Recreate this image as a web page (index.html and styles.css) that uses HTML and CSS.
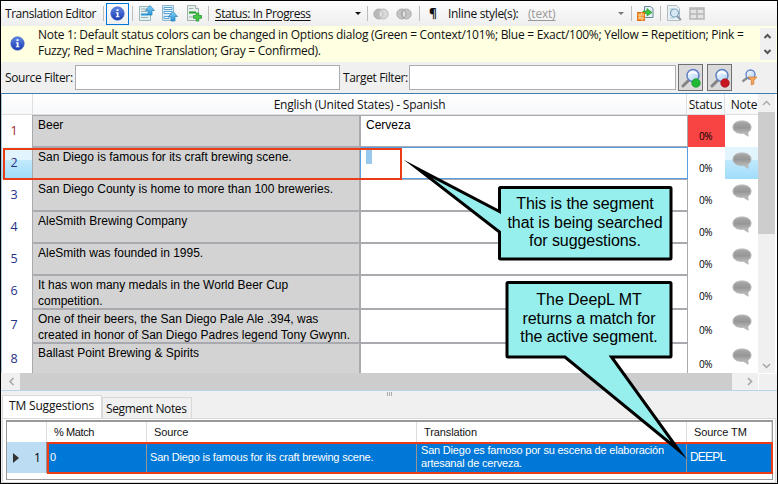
FILE: index.html
```html
<!DOCTYPE html>
<html lang="en">
<head>
<meta charset="utf-8">
<title>Translation Editor</title>
<link rel="stylesheet" href="styles.css">
</head>
<body>
<svg class="defs" width="0" height="0">
  <defs>
    <linearGradient id="bub" x2="0" y2="1"><stop offset="0" stop-color="#b5b5b5"/><stop offset=".45" stop-color="#999"/><stop offset="1" stop-color="#c6c6c6"/></linearGradient>
    <linearGradient id="inf" x2="0" y2="1"><stop offset="0" stop-color="#5f87e6"/><stop offset="1" stop-color="#1738ae"/></linearGradient>
    <linearGradient id="arr" x2="0" y2="1"><stop offset="0" stop-color="#82d2f8"/><stop offset="1" stop-color="#2d93d3"/></linearGradient>
    <linearGradient id="lens" x2="1" y2="1"><stop offset="0" stop-color="#fff"/><stop offset="1" stop-color="#a9cdf5"/></linearGradient>
  </defs>
  <symbol id="bubble" viewBox="0 0 20 18"><path d="M10 1C15 1 19 3.200 19 7.200c0 2.300-1.200 4-3.200 5l.3 4-4.400-2.900C5.500 13.800 1 11.500 1 7.200 1 3.200 5 1 10 1Z" fill="url(#bub)" stroke="#b4b4b4"/><path d="M2 7.500q8 2 16 0Q18 2 10 2T2 7.500" fill="#8f8f8f" opacity=".3"/></symbol>
  <symbol id="info" viewBox="0 0 15 15"><circle cx="7.500" cy="7.500" r="6.700" fill="url(#inf)" stroke="#4264c9" stroke-width=".7"/><path d="M6 6.200h2.500v4h1v1H5.800v-1h1v-3H6zM6.500 3.200h2v1.900h-2z" fill="#fff"/></symbol>
  <symbol id="lensIcon" viewBox="0 0 20 20"><path d="m2 18 6-6" stroke="#858585" stroke-width="3" stroke-linecap="round"/><circle cx="12" cy="7.500" r="6" fill="url(#lens)" stroke="#6080c4" stroke-width="1.500"/><path d="M8 6q3-4 8 0" stroke="#fff" stroke-width="2" fill="none"/></symbol>
</svg>
<main class="window">
  <header class="toolbar">
    <span class="title">Translation Editor</span>
    <i class="sep"></i>
    <span class="info-button"><svg width="15" height="15"><use href="#info"/></svg></span>
    <i class="sep sep-b"></i>
    <svg class="t-up" width="16" height="17" viewBox="0 0 16 17"><path d="M.5 1.500h11v14H.5z" fill="#e4eff0" stroke="#9ab7b9"/><path d="M2 4h6M2 6.500h6M2 12.500h7" stroke="#9aafb0"/><path d="M2 9.500h7" stroke="#2697df" stroke-width="2"/><path d="m11 .5 4.500 5H13V10H9V5.500H6.500z" fill="url(#arr)" stroke="#2584bd" stroke-width=".7"/></svg>
    <svg class="t-up2" width="16" height="17" viewBox="0 0 16 17"><path d="M.5.500h11v15H.5z" fill="#d9edf8" stroke="#94b9cf"/><path d="M2 2.500h8v2H2zM2 6.500h8v2H2zM2 11.500h5v2H2z" fill="#fff" stroke="#58a3d4"/><path d="m11 6.500 4.500 5H13V16H9v-4.500H6.500z" fill="url(#arr)" stroke="#2584bd" stroke-width=".7"/></svg>
    <svg class="t-add" width="16" height="17" viewBox="0 0 16 17"><path d="M1.500.500h8l3 3v12h-11z" fill="#e8f0ed" stroke="#9fb1aa"/><path d="M9.500.500v3h3" fill="#fff" stroke="#9fb1aa"/><path d="M3 3.500h4M3 12h4" stroke="#9aafa7"/><path d="M3 7.500h7" stroke="#229b29" stroke-width="2"/><path d="M7.500 10.500h2.700V8h2.600v2.500h2.700v2.800h-2.700v2.700h-2.600v-2.700H7.500z" fill="#46cc44" stroke="#188c23" stroke-width=".7"/></svg>
    <i class="sep sep-c"></i>
    <span class="status-link">Status: In Progress</span>
    <i class="caret"></i>
    <i class="sep sep-d"></i>
    <svg class="rings" width="16" height="12" viewBox="0 0 16 12"><circle cx="5.800" cy="6" r="5" fill="#b8b8b8" stroke="#b0b0b0"/><circle cx="10.200" cy="6" r="5" fill="#d9d9d9" stroke="#bbb"/><path d="M8 2q4 4 0 8-4-4 0-8" fill="#dedede" stroke="#aaa" stroke-width=".6"/></svg>
    <svg class="rings rings-b" width="16" height="12" viewBox="0 0 16 12"><circle cx="5.800" cy="6" r="5" fill="#c4c4c4" stroke="#adadad"/><circle cx="10.200" cy="6" r="5" fill="#c4c4c4" stroke="#adadad"/><path d="M8 2q4 4 0 8-4-4 0-8" fill="#e0e0e0" stroke="#999" stroke-width=".8"/></svg>
    <i class="sep sep-e"></i>
    <span class="pilcrow">¶</span>
    <span class="inline-label">Inline style(s):</span>
    <span class="inline-value">(text)</span>
    <i class="caret caret-gray"></i>
    <i class="sep sep-f"></i>
    <svg class="t-exp" width="17" height="17" viewBox="0 0 17 17"><path d="M7.500 1.500h6l2.500 2v9H7.500z" fill="#e7f1f4" stroke="#618a9a"/><path d="M6 6h4V3.500L15 7.500 10 11V8.500H6z" fill="#3ac43d" stroke="#248927" stroke-width=".6"/><path d="M.5 7.500h7v8h-7z" fill="#f39a36" stroke="#d96a12"/><path d="M.5 10h7m-7 3h7M4.500 7.500V10M3 10v3m2 0v3" stroke="#ffdfae" stroke-width=".8"/></svg>
    <i class="sep sep-g"></i>
    <svg class="t-prev" width="15" height="17" viewBox="0 0 15 17"><path d="M.5.500h9l3 3v12H.5z" fill="#eef3f5" stroke="#aabac0"/><path d="M2.500 4h4m-4 3h2m-2 3h2m-2 3h5" stroke="#a8c7d1"/><path d="m10 11 4 4" stroke="#8b9ba7" stroke-width="2"/><circle cx="7.500" cy="8" r="4" fill="#d5e8f4" stroke="#7ea3bd" stroke-width="1.200"/></svg>
    <svg class="t-grid" width="16" height="14" viewBox="0 0 16 14"><path d="M1 1h14v11H1z" fill="#e4e4e4" stroke="#b7b7b7" stroke-width="1.500"/><path d="M1 2h14M1 7h14M8 1v11" stroke="#b7b7b7" stroke-width="1.600"/></svg>
  </header>

  <section class="note">
    <svg class="note-icon" width="15" height="15"><use href="#info"/></svg>
    <p class="note-text">Note 1: Default status colors can be changed in Options dialog (Green = Context/101%; Blue = Exact/100%; Yellow = Repetition; Pink =<br>Fuzzy; Red = Machine Translation; Gray = Confirmed).</p>
    <svg class="note-spin" width="16" height="32" viewBox="0 0 16 32"><path d="m4.500 10 3-3 3 3m-6 12 3 3 3-3" fill="none" stroke="#555" stroke-width="2"/></svg>
  </section>

  <section class="filters">
    <span class="source-label">Source Filter:</span><span class="field source-field"></span>
    <span class="target-label">Target Filter:</span><span class="field target-field"></span>
    <span class="filter-button"><svg width="20" height="20"><use href="#lensIcon"/><circle cx="15" cy="15" r="4.300" fill="#20b735" stroke="#129428" stroke-width=".6"/></svg></span>
    <span class="filter-button"><svg width="20" height="20"><use href="#lensIcon"/><circle cx="15" cy="15" r="4.300" fill="#c81721" stroke="#97131a" stroke-width=".6"/></svg></span>
    <svg class="funnel" width="17" height="17" viewBox="0 0 17 17"><path d="m1.500 12.500 5-4" stroke="#8c8c8c" stroke-width="2.500"/><circle cx="9.500" cy="5.500" r="4.500" fill="url(#lens)" stroke="#6080c4" stroke-width="1.300"/><path d="M7 8h9l-3.200 3.500V15l-2.500 1v-4.500z" fill="#f8a65c" stroke="#cc7330" stroke-width=".7"/></svg>
  </section>

  <section class="grid">
    <div class="grid-main">
      <div class="grid-head"><span class="h-corner"></span><span class="h-lang"><b>English (United States) - Spanish</b></span><span class="h-status">Status</span><span class="h-note">Note</span></div>
      <div class="rows">
        <div class="row"><span class="num first">1</span><span class="src"><b>Beer</b></span><span class="tgt">Cerveza</span><span class="pct red">0%</span><span class="cmt"><svg><use href="#bubble"/></svg></span></div>
        <div class="row active"><span class="num">2</span><span class="src"><b>San Diego is famous for its craft brewing scene.</b></span><span class="tgt"><i class="cursor"></i></span><span class="pct">0%</span><span class="cmt"><svg><use href="#bubble"/></svg></span></div>
        <div class="row"><span class="num">3</span><span class="src"><b>San Diego County is home to more than 100 breweries.</b></span><span class="tgt"></span><span class="pct">0%</span><span class="cmt"><svg><use href="#bubble"/></svg></span></div>
        <div class="row"><span class="num">4</span><span class="src"><b>AleSmith Brewing Company</b></span><span class="tgt"></span><span class="pct">0%</span><span class="cmt"><svg><use href="#bubble"/></svg></span></div>
        <div class="row"><span class="num">5</span><span class="src"><b>AleSmith was founded in 1995.</b></span><span class="tgt"></span><span class="pct">0%</span><span class="cmt"><svg><use href="#bubble"/></svg></span></div>
        <div class="row tall"><span class="num">6</span><span class="src"><b>It has won many medals in the World Beer Cup<br>competition.</b></span><span class="tgt"></span><span class="pct">0%</span><span class="cmt"><svg><use href="#bubble"/></svg></span></div>
        <div class="row tall"><span class="num">7</span><span class="src"><b>One of their beers, the San Diego Pale Ale .394, was<br>created in honor of San Diego Padres legend Tony Gwynn.</b></span><span class="tgt"></span><span class="pct">0%</span><span class="cmt"><svg><use href="#bubble"/></svg></span></div>
        <div class="row"><span class="num">8</span><span class="src"><b>Ballast Point Brewing &amp; Spirits</b></span><span class="tgt"></span><span class="pct">0%</span><span class="cmt"><svg><use href="#bubble"/></svg></span></div>
      </div>
    </div>
    <div class="vscroll"><svg width="17" height="18" viewBox="0 0 17 18"><path d="m5 11 3.500-3.500L12 11" fill="none" stroke="#a6a6a6" stroke-width="1.300"/></svg><i class="vthumb"></i><svg width="17" height="16" viewBox="0 0 17 16"><path d="m5 6 3.500 3.500L12 6" fill="none" stroke="#a6a6a6" stroke-width="1.500"/></svg></div>
  </section>
  <div class="hscroll"><svg width="17" height="17" viewBox="0 0 17 17"><path d="M10.500 5 7 8.500l3.500 3.500" fill="none" stroke="#a6a6a6" stroke-width="1.600"/></svg><i class="hthumb"></i><svg width="26" height="17" viewBox="0 0 26 17"><path d="m16 5 3.500 3.500L16 12" fill="none" stroke="#a6a6a6" stroke-width="1.600"/></svg><i class="corner"></i></div>

  <nav class="tabs"><span class="tab current">TM Suggestions</span><span class="tab other">Segment Notes</span><svg class="grip" width="6" height="4"><path d="M.5 0v4m2-4v4m2-4v4" stroke="#aaa"/></svg></nav>
  <section class="panel">
    <div class="tm">
      <div class="tm-head"><span></span><span class="c-match">% Match</span><span class="c-source">Source</span><span class="c-trans">Translation</span><span class="c-tm">Source TM</span></div>
      <div class="tm-row"><span class="tm-num"><i class="play"></i>1</span><span class="v-match">0</span><span class="v-source">San Diego is famous for its craft brewing scene.</span><span class="v-trans"><b>San Diego es famoso por su escena de elaboración<br>artesanal de cerveza.</b></span><span class="v-tm">DEEPL</span></div>
    </div>
  </section>

  <div class="mark mark-segment"></div>
  <div class="mark mark-match"></div>
  <svg class="callout-shapes" width="778" height="484" viewBox="0 0 778 484">
    <g fill="#97efed" stroke="#000" stroke-width="3" stroke-linejoin="miter" stroke-miterlimit="20">
      <path d="M500.500 187.500h169.500q1 0 1 1V258q0 1-1 1H500.500q-1 0-1-1v-26L418 169l81.500 42.500v-23q0-1 1-1Z"/>
      <path d="M508 282.500h162q1 0 1 1V356q0 1-1 1h-58.500l67.500 93.500L565 357h-57q-1 0-1-1v-72.500q0-1 1-1Z"/>
    </g>
  </svg>
  <p class="callout callout-segment">This is the segment<br>that is being searched<br>for suggestions.</p>
  <p class="callout callout-match">The DeepL MT<br>returns a match for<br>the active segment.</p>
</main>
</body>
</html>
```

FILE: styles.css
```css
* { box-sizing: border-box; }
body { margin: 0; font: 12px/16px "Open Sans", "Noto Sans", sans-serif; color: #111; }
i, b { font-style: normal; font-weight: normal; }
svg { display: block; flex: none; }
span, p { white-space: nowrap; }
.defs { position: absolute; }
.window { position: relative; width: 778px; height: 484px; border: 1px solid #000; background: #f0f0f0; overflow: hidden; display: flex; flex-direction: column; }
.window > * { flex: none; }

.toolbar { height: 25px; display: flex; align-items: center; background: linear-gradient(#fdfdfd, #eee); padding-left: 4px; }
.title { width: 98px; letter-spacing: -.47px; }
.sep { width: 1px; height: 15px; background: #bdbdbd; flex: none; }
.info-button { width: 23px; height: 22px; border: 1px solid #0078d7; display: flex; align-items: center; justify-content: center; margin-left: 2px; }
.sep-b { margin-left: 3px; }
.t-up { margin-left: 6px; }
.t-up2 { margin-left: 7px; }
.t-add { margin-left: 8px; }
.sep-c { margin-left: 6px; }
.status-link { width: 137px; margin-left: 6px; letter-spacing: -.44px; text-decoration: underline; text-underline-offset: 2px; }
.caret { margin-left: 3px; width: 0; height: 0; border: 3px solid transparent; border-top-color: #111; border-bottom: 0; }
.sep-d { margin-left: 6px; }
.rings { margin-left: 5px; }
.rings-b { margin-left: 7px; }
.sep-e { margin-left: 7px; }
.pilcrow { width: 19px; margin-left: 9px; font-weight: bold; }
.inline-label { width: 80px; letter-spacing: -.33px; }
.inline-value { width: 90px; color: #999; text-decoration: underline; text-underline-offset: 2px; letter-spacing: -.2px; }
.caret-gray { border-top-color: #777; margin-left: 0; }
.sep-f { margin-left: 7px; }
.t-exp { margin-left: 5px; }
.sep-g { margin-left: 6px; }
.t-prev { margin-left: 6px; }
.t-grid { margin-left: 7px; }

.note { height: 36px; background: #ffffe1; display: flex; }
.note-icon { margin: 10px 0 0 9px; }
.note-text { margin: 1px 0 0 13px; width: 721px; line-height: 16px; letter-spacing: -.275px; }
.note-spin { background: #f0f0f0; margin: 2px 0 0 1px; }

.filters { height: 31px; display: flex; align-items: center; padding-left: 4px; }
.source-label { width: 70px; letter-spacing: -.38px; }
.field { height: 25px; border: 1px solid #abadb3; background: #fff; }
.source-field { width: 265px; }
.target-label { width: 66px; margin-left: 3px; letter-spacing: -.38px; }
.target-field { width: 267px; }
.filter-button { width: 25px; height: 27px; margin-left: 2px; background: #dadada; border: 1px solid #707070; display: flex; align-items: center; justify-content: center; }
.filter-button + .filter-button { margin-left: 4px; }
.funnel { margin-left: 9px; }

.grid { height: 280px; border-top: 1px solid #3c7fb1; border-left: 1px solid #a5c7de; display: flex; background: #fff; overflow: hidden; }
.grid-main { width: 756px; }
.grid-head { height: 21px; display: flex; line-height: 21px; background: linear-gradient(#fff, #f7f8fa); }
.grid-head > * { border-right: 1px solid #dedfe1; border-bottom: 1px solid #dedfe1; text-align: center; flex: none; letter-spacing: -.22px; }
.h-corner { width: 31px; }
.h-lang { width: 654px; }
.h-status { width: 38px; }
.h-note { width: 33px; padding-left: 5px; border-right: 0 !important; }
.row { height: 32px; display: flex; }
.row.tall { height: 34px; }
.row > * { flex: none; }
.num { width: 30px; text-align: center; padding-right: 6px; line-height: 32px; font-size: 12.5px; color: #1e3287; }
.num.first { color: #a01e2a; }
.src, .tgt { border: 1px solid #a9a9b0; font: 12px/16px "Liberation Sans", Arial, sans-serif; color: #000; padding: 1px 5px; letter-spacing: -.01px; }
.src { width: 328px; background: #d3d3d3; }
.tgt { width: 328px; background: #fff; }
.pct { width: 37px; padding: 13px 2px 0 0; text-align: center; font-size: 10px; letter-spacing: -.4px; color: #000; }
.pct.red { background: #f94444; }
.cmt { width: 33px; display: flex; justify-content: center; padding-top: 5px; }
.cmt svg { width: 20px; height: 18px; }
.active .num, .active .cmt { background: linear-gradient(#e2f5fe 0 40%, #c2e9fd 40%, #9fdcfb); }
.active .tgt { border-color: #569de5; }
.cursor { display: block; width: 6px; height: 15px; background: #99c9ef; }
.vscroll { width: 17px; background: #f0f0f0; }
.vthumb { display: block; height: 122px; background: #cdcdcd; }
.vscroll svg:last-child { margin-top: 124px; }
.hscroll { height: 18px; display: flex; padding-left: 2px; border-bottom: 1px solid #b5d5ea; }
.hthumb { width: 712px; background: #cdcdcd; }
.corner { border-left: 1px solid #fff; border-top: 1px solid #fff; width: 17px; }

.tabs { height: 27px; display: flex; align-items: flex-end; padding-left: 1px; position: relative; }
.tab { border: 1px solid #d9d9d9; border-bottom: 0; }
.current { width: 100px; height: 23px; background: #fff; padding: 2px 0 0 6px; letter-spacing: -.18px; }
.other { width: 90px; height: 21px; padding: 3px 0 0 3px; letter-spacing: -.38px; }
.grip { position: absolute; left: 386px; top: 1px; }
.panel { height: 65px; margin: 0 1px; border: 1px solid #d9d9d9; background: #fff; padding: 1px 2px 0 3px; }
.tm { height: 60px; border: 1px solid #999; border-top: 2px solid #999; }
.tm-head, .tm-row { display: grid; grid-template-columns: 40px 100px 270px 270px 1fr; font: 11px/20px "Liberation Sans", Arial, sans-serif; letter-spacing: -.2px; }
.tm-head { height: 20px; letter-spacing: -.1px; }
.tm-head .c-match { letter-spacing: -.4px; }
.tm-head > * { border-right: 1px solid #ddd; padding-left: 7px; }
.tm-row { height: 31px; color: #fff; background: #0078d7; line-height: 31px; }
.tm-row > * { border-right: 1px solid #949494; padding-left: 3px; }
.tm-row .tm-num { background: #bcdcf4; color: #000; display: flex; align-items: center; padding-left: 6px; font-family: "Open Sans", sans-serif; font-size: 12px; }
.play { border: 5px solid transparent; border-left: 6px solid #333; border-right: 0; margin-right: 15px; }
.tm-row .v-trans { line-height: 13px; padding: 2px 0 0 4px; }
.tm-row .v-tm { font-size: 12px; letter-spacing: -.8px; }

.mark { position: absolute; border: 2px solid #ea3c17; }
.mark-segment { left: 2px; top: 147px; width: 399px; height: 32px; }
.mark-match { left: 46px; top: 441px; width: 726px; height: 32px; }
.callout-shapes { position: absolute; left: -1px; top: -1px; }
.callout { position: absolute; margin: 0; text-align: center; font: 16px/18.500px "Liberation Sans", Arial, sans-serif; color: #000; letter-spacing: -.07px; }
.callout-segment { left: 498px; top: 194px; width: 172px; }
.callout-match { left: 506px; top: 290px; width: 164px; }
```
